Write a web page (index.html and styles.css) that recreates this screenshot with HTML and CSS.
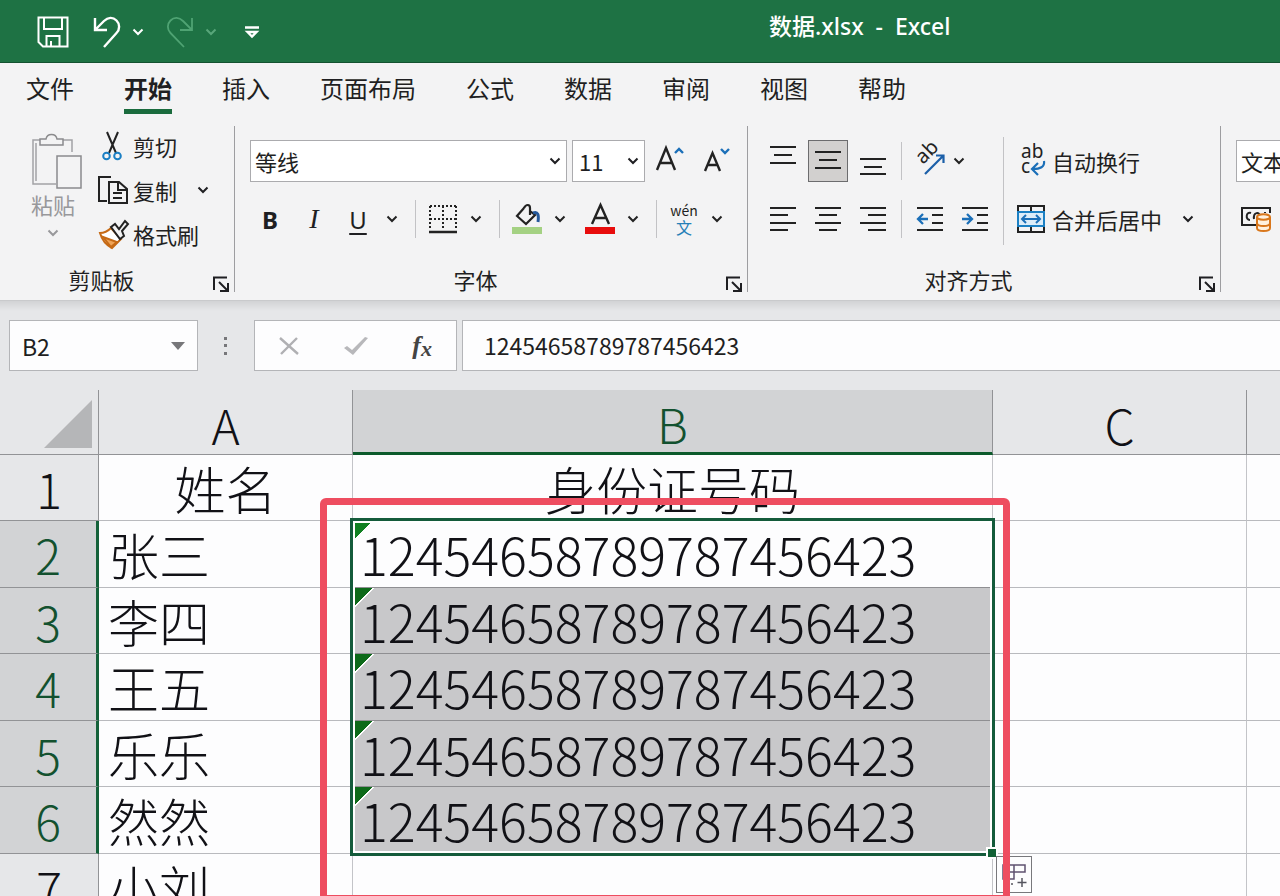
FILE: index.html
```html
<!DOCTYPE html>
<html lang="zh-CN">
<head>
<meta charset="utf-8">
<meta name="viewport" content="width=device-width, initial-scale=1">
<title>数据.xlsx - Excel</title>
<link rel="stylesheet" href="styles.css">
</head>
<body>
<svg class="defs" aria-hidden="true">
  <symbol id="chev" viewBox="0 0 12 8"><path d="M1.500 1.500 6 6l4.500-4.500" fill="none" stroke="currentColor" stroke-width="2"/></symbol>
  <symbol id="launch" viewBox="0 0 16 16"><path d="M1 14V1.500h13M6 6l8 8M15 7v8H7" fill="none" stroke="currentColor" stroke-width="2"/></symbol>
</svg>
<div class="app">
  <header class="titlebar">
    <div class="quick">
      <button class="save" aria-label="保存"><svg width="32" height="34" viewBox="0 0 32 32" fill="none" stroke="#fff" stroke-width="2"><path d="M1.500 1.500h29v29H6L1.500 26zM7 2v11h18V2M9.500 30V20h13v10M14 25v5"/></svg></button>
      <button class="undo" aria-label="撤消"><svg width="28" height="32" viewBox="0 0 28 32" fill="none" stroke="#fff" stroke-width="2.400"><path d="M2 2v12h12M2.500 13.500 11 5c4-4 9-4 12.500-.5s3.500 9 0 12.500L11 31"/></svg></button>
      <button class="arrow" aria-label="撤消选项"><svg width="12" height="8"><use href="#chev"/></svg></button>
      <button class="redo" aria-label="恢复"><svg width="28" height="32" viewBox="0 0 28 32" fill="none" stroke="#4fa373" stroke-width="1.800"><path d="M26 2v12H14M25.500 13.500 17 5C13 1 8 1 4.500 4.500s-3.500 9 0 12.500L18 31"/></svg></button>
      <button class="arrow dim" aria-label="恢复选项"><svg width="12" height="8"><use href="#chev"/></svg></button>
      <button class="custom" aria-label="自定义快速访问工具栏"><svg width="14" height="13" viewBox="0 0 14 13" fill="none" stroke="#fff" stroke-width="2.400"><path d="M0 1.500h14M2.500 6l4.500 4.500L11.500 6z"/></svg></button>
    </div>
    <h1 class="doc">数据.xlsx&nbsp; -&nbsp; Excel</h1>
  </header>

  <nav class="tabs">
    <a href="#">文件</a><a href="#" class="on">开始</a><a href="#">插入</a><a href="#">页面布局</a><a href="#">公式</a><a href="#">数据</a><a href="#">审阅</a><a href="#">视图</a><a href="#">帮助</a>
  </nav>

  <div class="ribbon">
    <section class="group clipboard">
      <div class="clip-body">
        <button class="paste">
          <svg width="52" height="56" viewBox="0 0 52 56" fill="none" stroke="#8b8b8d" stroke-width="1.500"><path d="M9 7H2v44h23M31 7h10v12M5 10v38" stroke="#a2a2a5"/><path d="M9 12V6h6c1-6 10-6 11 0h6v6z" fill="#f3f3f4"/><path d="M26 23h24v32H26z" fill="#f3f3f4"/></svg>
          <span>粘贴</span>
          <svg width="12" height="8"><use href="#chev"/></svg>
        </button>
        <div class="clip-list">
          <button><svg width="32" height="32" viewBox="0 0 32 32" fill="none" stroke="#222" stroke-width="2"><path d="M10 2l9 21M21 2 12 23"/><circle cx="9.500" cy="26" r="3.300" stroke="#1b7fc4"/><circle cx="20.500" cy="26" r="3.300" stroke="#1b7fc4"/></svg>剪切</button>
          <button><svg width="32" height="32" viewBox="0 0 32 32" fill="none" stroke="#222" stroke-width="2"><path d="M10 27H2V3h12M12 8h10l8 7v14H12zM21 8v8h9M16 19h9M16 24h9"/></svg>复制<svg class="more" width="12" height="8"><use href="#chev"/></svg></button>
          <button><svg width="32" height="32" viewBox="0 0 32 32" fill="none" stroke="#222" stroke-width="2"><path d="M3 15c5 0 8-2 11-5l10 11-9 9C9 27 5 22 3 15z" fill="#fff" stroke="#c66a15"/><path d="M6 19l14 5-6 5z" fill="#f0a457" stroke="#c66a15"/><path d="M14 9l4-3 4 5 6-8 3 3-6 7 2 5-4 3z" fill="#f3f3f4"/></svg>格式刷</button>
        </div>
      </div>
      <footer><span>剪贴板</span><button aria-label="剪贴板设置"><svg width="16" height="16"><use href="#launch"/></svg></button></footer>
    </section>

    <section class="group font">
      <div class="body">
        <div class="row">
          <label class="combo name"><select aria-label="字体"><option>等线</option></select><svg width="12" height="8"><use href="#chev"/></svg></label>
          <label class="combo size"><select aria-label="字号"><option>11</option></select><svg width="12" height="8"><use href="#chev"/></svg></label>
          <button class="grow" aria-label="增大字号"><svg width="30" height="32" viewBox="0 0 30 32" fill="none" stroke-width="2.400"><path d="M2 25 11 3l9 22M5 18h12" stroke="#222"/><path d="M20 8l4-4 4 4" stroke="#1b6fb8"/></svg></button>
          <button class="grow shrink" aria-label="减小字号"><svg width="30" height="32" viewBox="0 0 30 32" fill="none" stroke-width="2.400"><path d="M4 26 11.500 8 19 26M6.500 20h10" stroke="#222"/><path d="M20 4l4 4 4-4" stroke="#1b6fb8"/></svg></button>
        </div>
        <div class="row tools">
          <button class="b">B</button><button class="i">I</button><button class="u">U</button>
          <button class="arrow" aria-label="下划线选项"><svg width="12" height="8"><use href="#chev"/></svg></button>
          <i class="sep"></i>
          <button aria-label="边框"><svg width="30" height="30" viewBox="0 0 30 30" fill="none" stroke="#222" stroke-width="2"><path d="M2 2h27M2 15h27M2 2v24M15 2v24M28 2v24" stroke-dasharray="2 2"/><path d="M1 28h28" stroke-width="2.500"/></svg></button>
          <button class="arrow" aria-label="边框选项"><svg width="12" height="8"><use href="#chev"/></svg></button>
          <i class="sep"></i>
          <button aria-label="填充颜色"><svg width="30" height="32" viewBox="0 0 30 32" fill="none" stroke="#222" stroke-width="2.200"><path d="M0 24h30v7H0z" fill="#a4d183" stroke="none"/><path d="M12 5 5 13l9 8 9-9-5-4V5c0-4-4-4-6 0v0M18 5v7"/><path d="M21 10c5-2 6 2 5 9" stroke="#24589b" stroke-width="3"/></svg></button>
          <button class="arrow" aria-label="填充选项"><svg width="12" height="8"><use href="#chev"/></svg></button>
          <button aria-label="字体颜色"><svg width="30" height="32" viewBox="0 0 30 32" fill="none" stroke="#222" stroke-width="2.400"><path d="M0 24h30v7H0z" fill="#e80c0c" stroke="none"/><path d="M7 21 15.500 2 24 21M10 15h11"/></svg></button>
          <button class="arrow" aria-label="颜色选项"><svg width="12" height="8"><use href="#chev"/></svg></button>
          <i class="sep"></i>
          <button class="wen"><span>wén</span><span class="zh">文</span></button>
          <button class="arrow" aria-label="拼音选项"><svg width="12" height="8"><use href="#chev"/></svg></button>
        </div>
      </div>
      <footer><span>字体</span><button aria-label="字体设置"><svg width="16" height="16"><use href="#launch"/></svg></button></footer>
    </section>

    <section class="group align">
      <div class="cols">
        <div class="body">
          <div class="row">
            <button aria-label="顶端对齐"><svg width="26" height="30" viewBox="0 0 26 30" stroke="#222" stroke-width="2"><path d="M0 1h26M4 9h18M0 17h26"/></svg></button>
            <button class="pressed" aria-label="垂直居中"><svg width="26" height="30" viewBox="0 0 26 30" stroke="#222" stroke-width="2"><path d="M0 6h26M4 14h18M0 22h26"/></svg></button>
            <button aria-label="底端对齐"><svg width="26" height="30" viewBox="0 0 26 30" stroke="#222" stroke-width="2"><path d="M0 13h26M4 21h18M0 28h26"/></svg></button>
            <i class="sep"></i>
            <button aria-label="方向"><svg width="32" height="32" viewBox="0 0 32 32" fill="none"><text transform="translate(9 20) rotate(-45)" class="glyph" font-size="20">ab</text><path d="M11 29 29 11M22 10.500h7.500V18" stroke="#1b5fa8" stroke-width="2.200"/></svg></button>
            <button class="arrow" aria-label="方向选项"><svg width="12" height="8"><use href="#chev"/></svg></button>
          </div>
          <div class="row">
            <button aria-label="左对齐"><svg width="26" height="26" viewBox="0 0 26 26" stroke="#222" stroke-width="2"><path d="M0 2h26M0 9h18M0 17h26M0 24h18"/></svg></button>
            <button aria-label="居中"><svg width="26" height="26" viewBox="0 0 26 26" stroke="#222" stroke-width="2"><path d="M0 2h26M4 9h18M0 17h26M4 24h18"/></svg></button>
            <button aria-label="右对齐"><svg width="26" height="26" viewBox="0 0 26 26" stroke="#222" stroke-width="2"><path d="M0 2h26M8 9h18M0 17h26M8 24h18"/></svg></button>
            <i class="sep"></i>
            <button aria-label="减少缩进量"><svg width="26" height="26" viewBox="0 0 26 26" fill="none" stroke="#222" stroke-width="2"><path d="M0 2h26M15 9h11M15 17h11M0 24h26"/><path d="M11 13H1M6 8l-5 5 5 5" stroke="#1b6fb8" stroke-width="2.300"/></svg></button>
            <button aria-label="增加缩进量"><svg width="26" height="26" viewBox="0 0 26 26" fill="none" stroke="#222" stroke-width="2"><path d="M0 2h26M15 9h11M15 17h11M0 24h26"/><path d="M0 13h10M5 8l5 5-5 5" stroke="#1b6fb8" stroke-width="2.300"/></svg></button>
          </div>
        </div>
        <i class="sep tall"></i>
        <div class="body wraps">
          <button class="row"><svg width="30" height="32" viewBox="0 0 30 32" fill="none"><text x="5" y="13" class="glyph" font-size="19">ab</text><text x="5" y="28" class="glyph" font-size="19">c</text><path d="M28 16c1 6-4 8-11 8M22 18l-6 6 6 6" stroke="#1b6fb8" stroke-width="2.200"/></svg>自动换行</button>
          <button class="row"><svg width="30" height="30" viewBox="0 0 30 30" fill="none" stroke="#222" stroke-width="2"><path d="M2 2h26v26H2zM15 2v6M15 22v6"/><path d="M2 8h26v14H2z" fill="#dcedf9" stroke="#1b80c4"/><path d="M6 15h18M10 11l-4 4 4 4M20 11l4 4-4 4" stroke="#1b6fb8"/></svg>合并后居中<svg class="more" width="12" height="8"><use href="#chev"/></svg></button>
        </div>
      </div>
      <footer><span>对齐方式</span><button aria-label="对齐设置"><svg width="16" height="16"><use href="#launch"/></svg></button></footer>
    </section>

    <section class="group number">
      <div class="body">
        <label class="combo"><select aria-label="数字格式"><option>文本</option></select></label>
        <button class="row" aria-label="会计数字格式"><svg width="32" height="28" viewBox="0 0 32 28" fill="none" stroke="#222" stroke-width="2"><path d="M16 20H2V3h28v5M11 8c-5-2-6 7-1 7M14 14c-1-7 6-8 6-2M25 8v-1"/><path d="M17 12v11c0 4 13 4 13 0V12" fill="#fff1df" stroke="#d9771c"/><ellipse cx="23.500" cy="12" rx="6.500" ry="2.800" fill="#fff1df" stroke="#d9771c"/><path d="M17 18c0 4 13 4 13 0" stroke="#d9771c"/></svg></button>
      </div>
    </section>
  </div>

  <div class="formula-bar">
    <label class="box namebox"><input type="text" value="B2" aria-label="名称框"><svg width="14" height="8"><path d="M0 0h14L7 8z" fill="#77777a"/></svg></label>
    <svg class="dots" width="4" height="20" fill="#77777a"><path d="M0 1h3v3H0zM0 8h3v3H0zM0 16h3v3H0z"/></svg>
    <div class="box actions">
      <button aria-label="取消"><svg width="20" height="18" viewBox="0 0 20 18"><path d="M1 1l18 16M18 1 2 17" stroke="#b0b0b3" stroke-width="2.400"/></svg></button>
      <button aria-label="输入"><svg width="24" height="20" viewBox="0 0 24 20"><path d="M0 12l3-2 5 4L21 1l3 1L9 19z" fill="#b8b8bb"/></svg></button>
      <button class="fx" aria-label="插入函数">f<span>x</span></button>
    </div>
    <input class="box formula" type="text" value="12454658789787456423" aria-label="编辑栏">
  </div>

  <main class="sheet">
    <table>
      <colgroup><col class="c-head"><col class="c-a"><col class="c-b"><col class="c-c"><col></colgroup>
      <thead><tr><th class="corner"><svg width="49" height="50"><path d="M48 1v48H0z" fill="#b5b6b8"/></svg></th><th>A</th><th class="sel">B</th><th>C</th><th></th></tr></thead>
      <tbody>
        <tr><th>1</th><td class="mid">姓名</td><td class="mid">身份证号码</td><td></td><td></td></tr>
        <tr class="sel"><th>2</th><td>张三</td><td class="num first">12454658789787456423</td><td></td><td></td></tr>
        <tr class="sel"><th>3</th><td>李四</td><td class="num">12454658789787456423</td><td></td><td></td></tr>
        <tr class="sel"><th>4</th><td>王五</td><td class="num">12454658789787456423</td><td></td><td></td></tr>
        <tr class="sel"><th>5</th><td>乐乐</td><td class="num">12454658789787456423</td><td></td><td></td></tr>
        <tr class="sel"><th>6</th><td>然然</td><td class="num">12454658789787456423</td><td></td><td></td></tr>
        <tr><th>7</th><td>小刘</td><td></td><td></td><td></td></tr>
      </tbody>
    </table>
    <div class="selection"><i class="handle"></i></div>
    <button class="quick-analysis" aria-label="快速分析"><svg width="30" height="30" viewBox="0 0 30 30" fill="none" stroke="#55555f" stroke-width="1.500"><path d="M4 5h22v7H4zM4 12v7h11V5" stroke="#5f5170"/><path d="M4 24h12" stroke-dasharray="2 2"/><path d="M23 18v9M18.500 22.500h9"/></svg></button>
    <div class="marker"></div>
  </main>
</div>
</body>
</html>
```

FILE: styles.css
```css
* { box-sizing: border-box; }
body { margin: 0; font-family: "Noto Sans CJK SC", "Noto Sans", sans-serif; color: #1f1f22; }
button, select, input { font: inherit; color: inherit; background: none; border: 0; padding: 0; margin: 0; border-radius: 0; }
button { display: flex; align-items: center; justify-content: center; flex: none; }
svg { display: block; flex: none; overflow: visible; }
.defs { position: absolute; width: 0; height: 0; }
.app { display: flex; flex-direction: column; height: 100vh; overflow: hidden; background: #e6e7e9; }

.titlebar { display: flex; flex: none; align-items: center; height: 63px; background: #1e7244; border-bottom: 1px solid #145230; color: #fff; }
.quick { display: flex; align-items: center; flex: 1; padding: 2px 0 0 37px; }
.quick .undo { margin-left: 24px; }
.quick .arrow { width: 12px; margin-left: 11px; }
.quick .redo { margin-left: 22px; }
.quick .custom { margin-left: 28px; }
.quick .dim { color: #58a67a; }
.doc { flex: 1; margin: 0 0 10px; padding-left: 221px; font: 500 23px/32px "Noto Sans", "Noto Sans CJK SC", sans-serif; white-space: nowrap; }

.tabs { display: flex; flex: none; gap: 50px; height: 57px; padding: 7px 26px 0; background: #f3f3f4; font-size: 24px; line-height: 36px; }
.tabs a { height: 44px; color: inherit; text-decoration: none; white-space: nowrap; }
.tabs .on { font-weight: 700; border-bottom: 5px solid #1a6b3d; }

.ribbon { position: relative; display: flex; flex: none; height: 181px; background: #f3f3f4; border-bottom: 1px solid #c9cacc; font-size: 22px; overflow: hidden; }
.group { position: relative; display: flex; flex-direction: column; justify-content: space-between; flex: none; padding-bottom: 3px; }
.group::after { content: ""; position: absolute; right: 0; top: 6px; bottom: 8px; width: 1px; background: #9d9da0; }
.group footer { display: grid; grid-template-columns: 1fr auto; align-items: center; height: 36px; line-height: 36px; text-align: center; }
.group footer button { margin: 10px 6px 0 0; }
.clipboard { width: 235px; }
.clipboard footer span { padding-right: 10px; }
.font { width: 513px; }
.font footer span { padding-right: 10px; }
.align { width: 473px; }
.align footer span { padding-right: 10px; }
.number { flex: 1; padding-left: 15px; overflow: hidden; }
.number::after { display: none; }

.clip-body { display: flex; padding-top: 4px; }
.paste { flex-direction: column; justify-content: flex-start; width: 76px; margin: 9px 6px 0 15px; color: #98989b; line-height: 30px; }
.paste span { margin-bottom: 10px; }
.paste > svg:first-child { margin-left: 8px; }
.clip-list button { height: 44px; gap: 4px; justify-content: flex-start; }
.clip-list .more { margin-left: 16px; }
.clip-list, .wraps { white-space: nowrap; }

.body { display: flex; flex-direction: column; gap: 16px; padding-top: 20px; }
.row { display: flex; align-items: center; height: 42px; }
.combo { display: flex; flex: none; align-items: center; height: 42px; padding: 0 5px 0 4px; background: #fff; border: 1px solid #ababae; }
.combo select { flex: 1; min-width: 0; height: 40px; appearance: none; }
.combo.name { width: 317px; margin-right: 5px; }
.combo.size { width: 73px; margin-right: 10px; padding-left: 6px; }
.number .combo { width: 120px; }
.number .row { width: 40px; }
.font .body { padding-left: 15px; }
.grow { width: 30px; }
.shrink { margin-left: 16px; }
.tools button { width: 30px; }
.tools .arrow { width: 12px; margin: 0 12px; }
.tools .arrow + button { margin-left: 7px; }
.arrow svg { color: #222; }
.quick .arrow svg { color: inherit; }
.tools .b, .tools .i, .tools .u { width: 40px; margin-right: 4px; font-family: "Noto Sans", sans-serif; font-size: 24px; }
.tools .b { font-weight: 700; }
.tools .i { font-family: "Liberation Serif", serif; font-style: italic; font-size: 28px; }
.tools .u { margin-right: -4px; text-decoration: underline; text-underline-offset: 4px; text-decoration-thickness: 2px; }
.sep { flex: none; width: 1px; height: 38px; background: #c2c2c5; }
.tools .sep { margin-right: 12px; margin-left: 5px; }
.tools .wen { flex-direction: column; width: 30px; font-size: 14px; line-height: 17px; }
.tools .wen .zh { color: #2580b8; font-size: 16px; }

.align .cols { display: flex; padding-left: 15px; }
.cols .body:first-child button { width: 40px; height: 42px; margin-right: 5px; }
.cols .body:first-child .arrow { width: 12px; margin: 0 0 0 -2px; }
.cols .body:first-child .sep { margin: 0 8px 0 3px; }
.cols .pressed { background: #d2d0cf; border: 1px solid #6c6c6e; }
.sep.tall { height: 108px; margin: 17px 12px 0 3px; }
.wraps button { gap: 6px; justify-content: flex-start; }
.wraps .more { margin-left: 14px; }
.glyph { fill: #222; font-family: "Noto Sans", sans-serif; }

.formula-bar { display: flex; flex: none; align-items: center; height: 89px; padding-left: 9px; font-size: 23px; background: linear-gradient(#d2d3d5, #e6e7e9 10px); }
.box { height: 51px; background: #fdfdfe; border: 1px solid #b4b5b8; }
.namebox { display: flex; align-items: center; width: 189px; padding: 0 12px; }
.namebox input { flex: 1; min-width: 0; }
.dots { margin: 0 26px; }
.actions { display: flex; align-items: center; justify-content: space-between; width: 203px; margin-right: 5px; padding: 0 24px; }
.actions .fx { font: italic 700 26px/30px "Liberation Serif", serif; color: #444; }
.actions .fx span { font-size: 22px; padding-top: 6px; }
.formula { flex: 1; min-width: 0; padding: 0 21px 2px; border-right: 0; }

.sheet { position: relative; flex: 1; overflow: hidden; }
table { width: 100%; table-layout: fixed; border-collapse: separate; border-spacing: 0; font-size: 51px; line-height: 60px; color: #111116; }
.c-head { width: 99px; }
.c-a, .c-c { width: 254px; }
.c-b { width: 640px; }
th, td { height: 66px; padding: 0; font-weight: 300; overflow: hidden; white-space: nowrap; border-right: 1px solid #c3c4c8; border-bottom: 1px solid #b9babe; }
tbody tr:nth-child(even) > * { height: 67px; }
th { background: #e6e7e9; border-color: #929396; font-size: 48px; }
thead th { height: 65px; padding-top: 4px; line-height: 56px; }
tr > :last-child { border-right: 0; }
.corner svg { margin-left: 44px; }
thead .sel { background: #d2d3d5; border-bottom: 3px solid #0c5a2b; color: #13512f; }
td { background: #fdfdfe; text-align: left; padding-left: 9px; }
td.mid { text-align: center; padding: 0; }
tr.sel th { background: #d2d3d5; color: #13512f; border-right: 3px solid #14613a; }
td.num { background: linear-gradient(135deg, #0d6a19 0 14px, #fff 14px 15px, #c8c8ca 15px); padding-left: 7px; border-bottom-color: #8f8f92; font-size: 52px; }
td.num.first { background: linear-gradient(135deg, #108021 0 14px, #fdfdfe 14px); }
.selection { position: absolute; left: 350px; top: 128px; width: 645px; height: 338px; border: 3px solid #145b3b; box-shadow: inset 0 0 0 2px #fff; }
.handle { position: absolute; right: -6px; bottom: -6px; width: 12px; height: 12px; background: #136237; border: 2px solid #fff; }
.quick-analysis { position: absolute; left: 996px; top: 466px; width: 36px; height: 37px; background: #fdfdfe; border: 1px solid #78787c; }
.marker { position: absolute; left: 320px; top: 108px; width: 690px; height: 404px; border: 7px solid #ee4d60; border-radius: 6px; }
```
